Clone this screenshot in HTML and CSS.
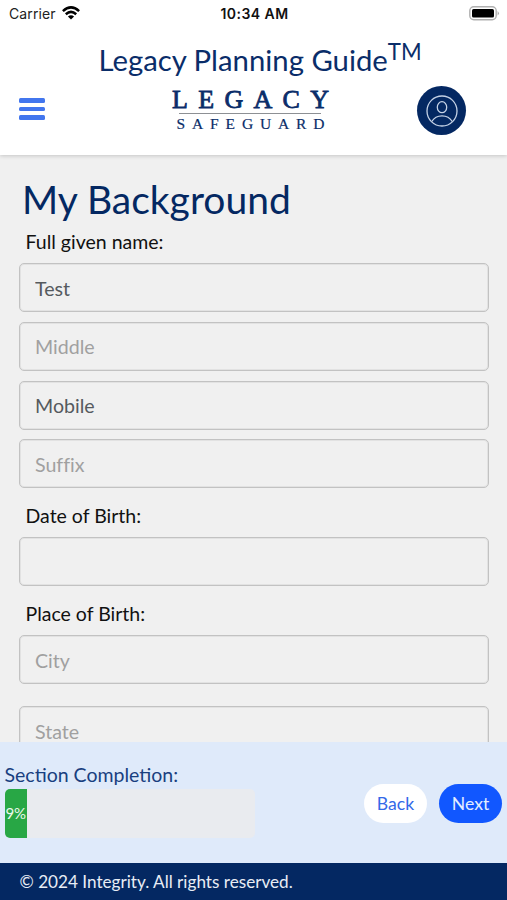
FILE: index.html
```html
<!DOCTYPE html>
<html lang="en">
<head>
<meta charset="utf-8">
<meta name="viewport" content="width=device-width, initial-scale=1">
<title>Legacy Planning Guide</title>
<link rel="stylesheet" href="styles.css">
</head>
<body>
<div class="app">
  <header class="header">
    <div class="status">
      <div class="carrier"><span>Carrier</span>
        <svg width="18" height="14" viewBox="0 0 18 14" fill="none" stroke="#000" stroke-width="2.5"><path d="M.9 5.1Q9-2.4 17.1 5.1M3.8 8.2q5.2-4.6 10.4 0"/><path d="M9 13.6 5.9 10.5q3.1-2.5 6.2 0Z" fill="#000" stroke="none"/></svg>
      </div>
      <span class="time">10:34 AM</span>
      <svg class="battery" width="31" height="15" viewBox="0 0 31 15"><rect x=".8" y=".8" width="26.4" height="13" rx="4" fill="#fff" stroke="#b0b0b0" stroke-width="1.4"/><rect x="3" y="3" width="22" height="8.6" rx="1.6"/><path d="M28.6 5q2.6 2.3 0 4.6Z" fill="#aaa"/></svg>
    </div>
    <div class="title">Legacy Planning Guide<span class="tm">TM</span></div>
    <div class="nav">
      <button class="menu" aria-label="Menu"><i></i><i></i><i></i></button>
      <svg class="logo" width="168" height="54" viewBox="-4 -6 168 54" fill="#0a2d69">
        <text class="logo-main" x="1" y="19" textLength="157">LEGACY</text>
        <path d="M8 24.5h142" stroke="#8d9094"/>
        <text class="logo-sub" x="5.5" y="40" textLength="148">SAFEGUARD</text>
      </svg>
      <button class="profile" aria-label="Profile">
        <svg width="32" height="32" viewBox="0 0 32 32" fill="none" stroke="#c5d2e6" stroke-width="1.3"><circle cx="16" cy="16" r="15"/><ellipse cx="16" cy="12.2" rx="4.7" ry="5.5"/><path d="M5.8 26.5q3.3-5.7 10.2-5.7t10.2 5.7"/></svg>
      </button>
    </div>
  </header>
  <main class="content">
    <h1>My Background</h1>
    <div class="label">Full given name:</div>
    <div class="fields">
      <input value="Test" aria-label="First name">
      <input placeholder="Middle">
      <input value="Mobile" aria-label="Last name">
      <input class="suffix" placeholder="Suffix">
    </div>
    <div class="label birth">Date of Birth:</div>
    <input aria-label="Date of birth">
    <div class="label birth">Place of Birth:</div>
    <div class="fields place">
      <input placeholder="City">
      <input placeholder="State">
    </div>
  </main>
  <section class="completion">
    <div class="progress-block">
      <div class="progress-label">Section Completion:</div>
      <div class="progress"><div class="bar" style="width:9%">9%</div></div>
    </div>
    <div class="actions"><button class="back">Back</button><button class="next">Next</button></div>
  </section>
  <footer class="footer">© 2024 Integrity. All rights reserved.</footer>
</div>
</body>
</html>
```
FILE: styles.css
```css
* { box-sizing: border-box; }
body { margin: 0; font-family: Lato, sans-serif; background: #f0f0f0; }
button { border: 0; padding: 0; font-family: inherit; }
.app { height: 900px; display: flex; flex-direction: column; overflow: hidden; }
.header { position: relative; flex: 0 0 155px; background: #fff; box-shadow: 0 1px 4px rgba(0, 0, 0, .18); }
.status { height: 28px; padding: 0 7px 0 9px; display: grid; grid-template-columns: 1fr auto 1fr; align-items: center; font: 14px/28px Inter, sans-serif; color: #222; }
.carrier { display: flex; align-items: center; gap: 6px; letter-spacing: .12px; }
.carrier svg { margin-bottom: 2px; }
.time { font-weight: 600; color: #111; font-size: 14px; letter-spacing: .45px; }
.battery { justify-self: end; margin-bottom: 2px; }
.title { height: 52px; padding-left: 98.5px; font-size: 29.3px; line-height: 64px; color: #0a2d69; white-space: nowrap; }
.tm { display: inline-block; font-size: 22.3px; line-height: 1; transform: translateY(-11px); }
.nav { height: 62px; padding: 0 41px 0 19px; display: flex; align-items: center; justify-content: space-between; }
.menu { width: 26px; height: 22px; margin-bottom: 4px; background: none; display: flex; flex-direction: column; justify-content: space-between; }
.menu i { width: 26px; height: 4.6px; border-radius: 1.5px; background: #4276ee; }
.logo { margin-left: 39px; margin-bottom: 2px; }
.logo text { font-family: "Liberation Serif", serif; }
.logo .logo-main { font-size: 26px; font-weight: 400; stroke: #0a2d69; stroke-width: .8px; }
.logo .logo-sub { font-size: 15.5px; stroke: #0a2d69; stroke-width: .2px; }
.profile { width: 49px; height: 49px; margin-bottom: 1px; border-radius: 50%; background: #042862; display: grid; place-items: center; }
.content { flex: 1; min-height: 0; overflow: hidden; padding: 19.5px 18px 0 19px; }
h1 { margin: 0; padding-left: 3px; font-size: 39px; line-height: 49px; font-weight: 400; color: #042862; }
.label { padding-left: 6.5px; font-size: 19.5px; color: #111; }
h1 + .label { height: 39.7px; line-height: 36px; }
.birth { height: 49px; line-height: 55px; }
.fields { display: flex; flex-direction: column; gap: 9.7px; }
.place { gap: 22px; }
input { display: block; width: 100%; height: 49px; padding: 1px 15px 0; border: 1px solid #c2c2c2; border-radius: 5px; background: #f0f0f0; box-shadow: inset 0 0 0 1px #e2e2e2; font: 19.6px Lato, sans-serif; color: #555a5e; }
input::placeholder { color: #a0a0a0; opacity: 1; }
.suffix { font-variant-ligatures: none; }
.completion { flex: 0 0 121.5px; padding: 19px 5px 0 4.5px; display: flex; justify-content: space-between; background: #dfeafa; }
.progress-label { font-size: 19.5px; line-height: 27px; color: #193f80; }
.progress { width: 250px; height: 49px; margin-top: 1px; border-radius: 5px; overflow: hidden; background: #e9ebef; }
.bar { height: 100%; display: flex; align-items: center; justify-content: center; background: #28a745; color: #e8f8eb; font-size: 15px; }
.actions { display: flex; gap: 12px; margin-top: 23px; }
.actions button { width: 63px; height: 39px; border-radius: 20px; font-size: 17.6px; }
.back { background: #fff; color: #3369e8; }
.next { background: #1157ff; color: #e3edff; }
.footer { flex: 1 0 36.5px; max-height: 37px; padding-left: 19.5px; background: #042862; color: #e8edf5; font-size: 17.15px; line-height: 37px; }
```
